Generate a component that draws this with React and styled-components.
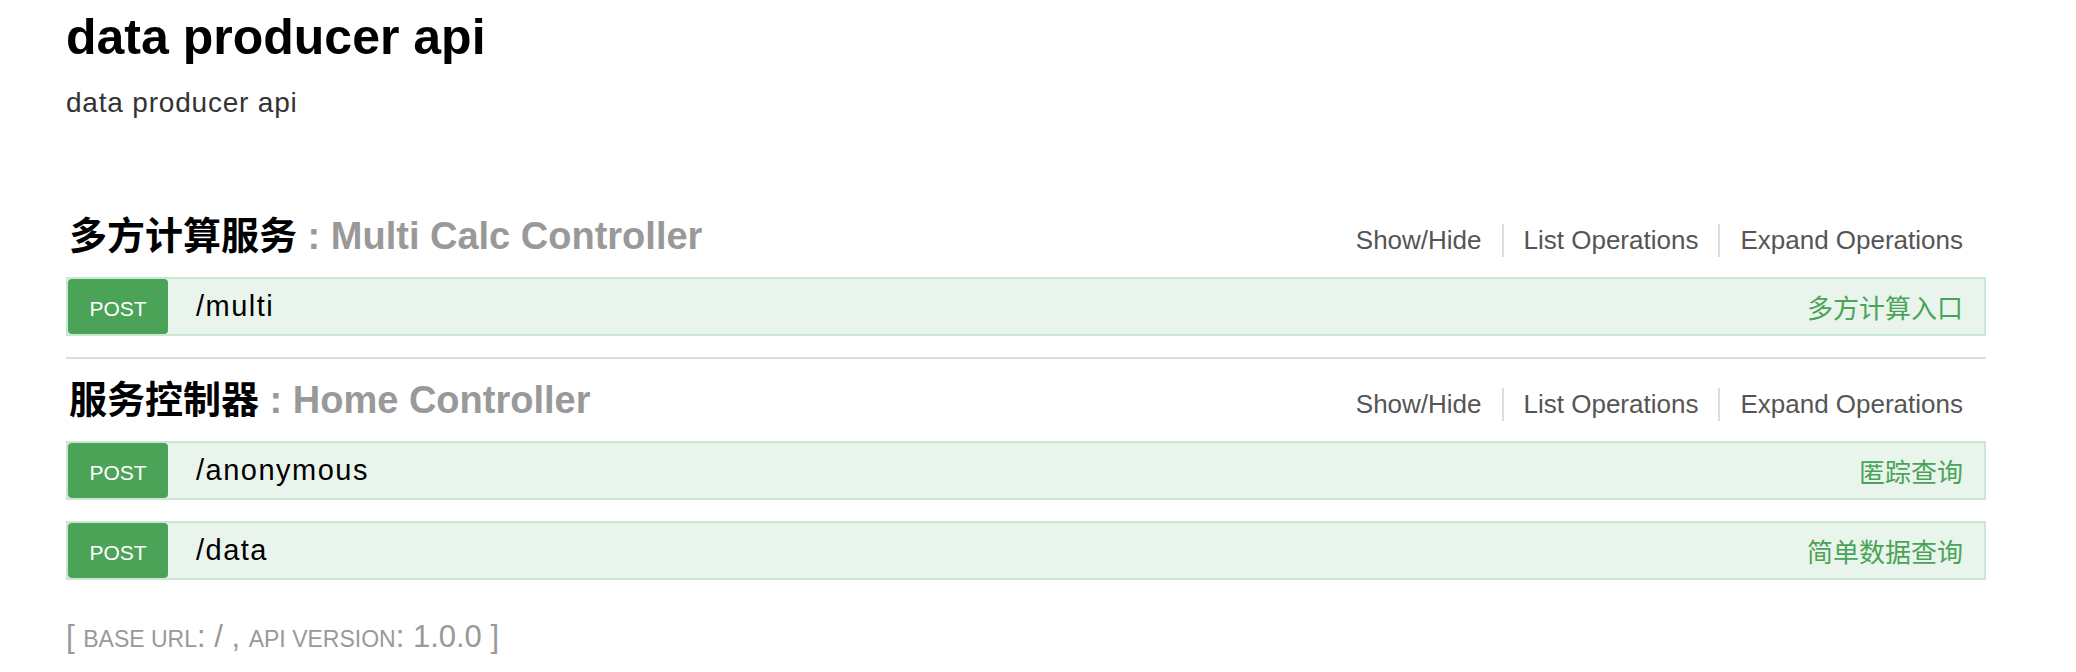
import React from 'react';
import styled, { createGlobalStyle } from 'styled-components';

const GlobalStyle = createGlobalStyle`
  body {
    margin: 0;
    background: #ffffff;
    font-family: "Liberation Sans", "Noto Sans CJK SC", Arial, sans-serif;
  }
`;

const green = '#4ba358';

const Wrap = styled.div`
  width: 1920px;
  padding: 12px 0 0 66px;
`;

const InfoTitle = styled.h1`
  margin: 0 0 25px;
  font-size: 50px;
  line-height: 50px;
  font-weight: bold;
  color: #000;
`;

const InfoDescription = styled.div`
  margin-bottom: 76px;
  font-size: 28px;
  line-height: 32px;
  letter-spacing: 0.8px;
  color: #333;
`;

const Resources = styled.ul`
  list-style: none;
  margin: 0;
  padding: 0;
`;

const Resource = styled.li`
  border-bottom: 2px solid #dddddd;
  &:last-child {
    border-bottom: none;
  }
`;

const ResourceHeading = styled.div`
  display: flex;
  justify-content: space-between;
  align-items: flex-start;
`;

const ResourceTitle = styled.h2`
  margin: 0;
  padding: 20px 0 20px 3px;
  font-size: 38px;
  line-height: 42px;
  font-weight: bold;
  color: #999;
`;

const TagName = styled.span`
  color: #000;
`;

const Options = styled.ul`
  display: flex;
  list-style: none;
  margin: 29px 23px 0 0;
  padding: 0;
`;

const OptionItem = styled.li`
  padding: 2px 20px;
  border-right: 2px solid #dddddd;
  font-size: 26px;
  line-height: 29px;
  color: #555;
  &:last-child {
    padding-right: 0;
    border-right: none;
  }
`;

const Operations = styled.ul`
  list-style: none;
  margin: 0;
  padding: 0;
`;

const OperationRow = styled.li`
  display: flex;
  align-items: center;
  height: 55px;
  margin-bottom: 21px;
  background: #e9f4ec;
  border: 2px solid #c9e7d3;
`;

const MethodBadge = styled.span`
  align-self: stretch;
  width: 100px;
  box-sizing: border-box;
  padding-top: 4px;
  display: flex;
  align-items: center;
  justify-content: center;
  background: ${green};
  border-radius: 4px;
  color: #fff;
  font-size: 21px;
  text-transform: uppercase;
`;

const Path = styled.span`
  margin-left: 28px;
  font-size: 29px;
  letter-spacing: 1.5px;
  color: #000;
`;

const Summary = styled.span`
  margin-left: auto;
  margin-right: 21px;
  font-size: 26px;
  color: ${green};
`;

const Footer = styled.h4`
  margin: 40px 0 0;
  font-size: 31px;
  line-height: 34px;
  font-weight: normal;
  color: #999;
`;

// small caps, drawn as reduced capitals
const SmallCaps = styled.span`
  font-size: 23px;
  text-transform: uppercase;
`;

const resources = [
  {
    tag: '多方计算服务',
    name: 'Multi Calc Controller',
    ops: [{ method: 'post', path: '/multi', summary: '多方计算入口' }],
  },
  {
    tag: '服务控制器',
    name: 'Home Controller',
    ops: [
      { method: 'post', path: '/anonymous', summary: '匿踪查询' },
      { method: 'post', path: '/data', summary: '简单数据查询' },
    ],
  },
];

const App = () => {
  return <Wrap>
    <GlobalStyle />
    <InfoTitle>data producer api</InfoTitle>
    <InfoDescription>data producer api</InfoDescription>
    <Resources>
      {resources.map(res => (
        <Resource key={res.tag}>
          <ResourceHeading>
            <ResourceTitle>
              <TagName>{res.tag}</TagName> : {res.name}
            </ResourceTitle>
            <Options>
              <OptionItem>Show/Hide</OptionItem>
              <OptionItem>List Operations</OptionItem>
              <OptionItem>Expand Operations</OptionItem>
            </Options>
          </ResourceHeading>
          <Operations>
            {res.ops.map(op => (
              <OperationRow key={op.path}>
                <MethodBadge>{op.method}</MethodBadge>
                <Path>{op.path}</Path>
                <Summary>{op.summary}</Summary>
              </OperationRow>
            ))}
          </Operations>
        </Resource>
      ))}
    </Resources>
    <Footer>
      [ <SmallCaps>base url</SmallCaps>: / , <SmallCaps>api version</SmallCaps>: 1.0.0 ]
    </Footer>
  </Wrap>
}

export default App;
